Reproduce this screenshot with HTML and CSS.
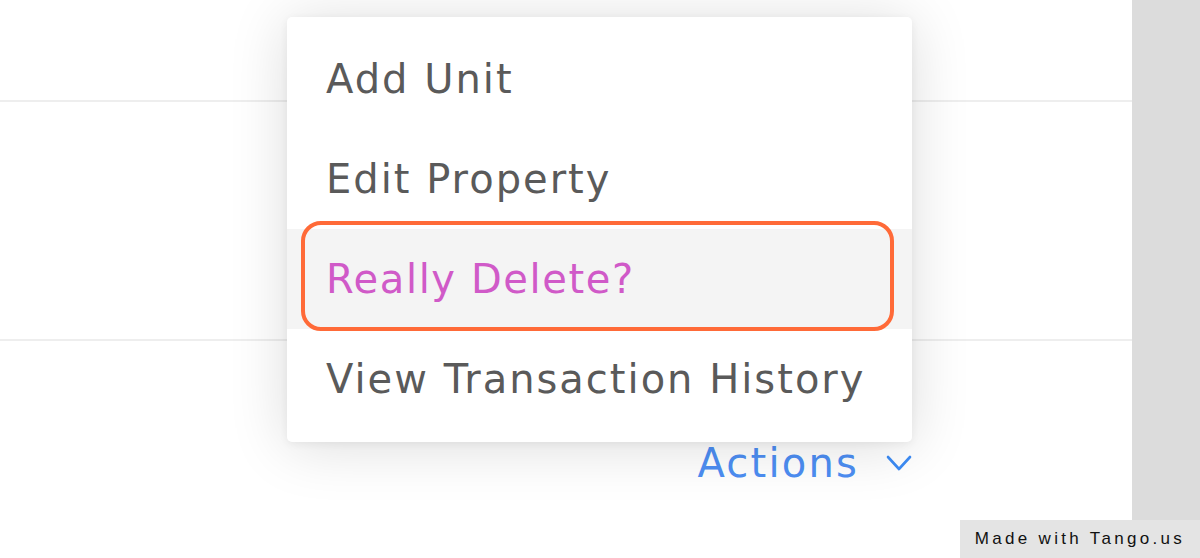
FILE: index.html
```html
<!DOCTYPE html>
<html>
<head>
<meta charset="utf-8">
<link rel="stylesheet" href="styles.css">
</head>
<body>
<div class="screen">
  <div class="content">
    <div class="row row-top"></div>
    <div class="row row-mid"></div>
    <div class="row row-actions">
      <button class="actions"><span class="actions-label">Actions</span>
        <svg class="chev" width="26" height="16" viewBox="0 0 26 16"><path d="M2 2 L13 14 L24 2" fill="none" stroke="#3d8cf5" stroke-width="2.6" stroke-linecap="round" stroke-linejoin="round"/></svg>
      </button>
    </div>
    <div class="menu">
      <div class="item">Add Unit</div>
      <div class="item">Edit Property</div>
      <div class="item item-danger">Really Delete?<span class="ring"></span></div>
      <div class="item">View Transaction History</div>
    </div>
  </div>
  <div class="side"></div>
  <div class="badge">Made with Tango.us</div>
</div>
</body>
</html>
```
FILE: styles.css
```css
html, body {
  margin: 0;
  padding: 0;
  background: #ffffff;
}
.screen {
  position: relative;
  display: flex;
  width: 1200px;
  height: 558px;
  overflow: hidden;
  font-family: "DejaVu Sans", sans-serif;
}
.content {
  position: relative;
  flex: 1;
  display: flex;
  flex-direction: column;
  background: #ffffff;
}
.row-top {
  height: 100px;
  border-bottom: 2px solid #eeeeee;
}
.row-mid {
  height: 237px;
  border-bottom: 2px solid #eeeeee;
}
.row-actions {
  display: flex;
  justify-content: flex-end;
  padding: 101px 220px 0 0;
}
.actions {
  display: flex;
  align-items: center;
  gap: 27px;
  background: none;
  border: 0;
  padding: 0;
  font-family: inherit;
  font-size: 40px;
  letter-spacing: 2.2px;
  color: #4d8ef3;
  line-height: 42px;
}
.chev {
  display: block;
}
.menu {
  position: absolute;
  left: 287px;
  top: 17px;
  width: 625px;
  padding: 12px 0 13px;
  background: #ffffff;
  border-radius: 5px;
  box-shadow: 0 4px 60px rgba(0, 0, 0, 0.14), 0 2px 8px rgba(0, 0, 0, 0.06);
}
.item {
  position: relative;
  height: 100px;
  display: flex;
  align-items: center;
  padding-left: 39px;
  font-size: 40px;
  letter-spacing: 2px;
  color: #5a5a5a;
}
.item-danger {
  background: #f4f4f4;
  color: #d05ac8;
  letter-spacing: 1.6px;
}
.ring {
  position: absolute;
  left: 14px;
  right: 18px;
  top: -8px;
  bottom: -2px;
  border: 4.5px solid #ff6a38;
  border-radius: 20px;
}
.side {
  width: 68px;
  background: #dcdcdc;
}
.badge {
  position: absolute;
  right: 0;
  bottom: 0;
  width: 240px;
  height: 38px;
  display: flex;
  align-items: center;
  justify-content: center;
  background: #e4e4e4;
  font-family: "Liberation Sans", sans-serif;
  font-size: 17px;
  letter-spacing: 3.3px;
  color: #111111;
}
```
